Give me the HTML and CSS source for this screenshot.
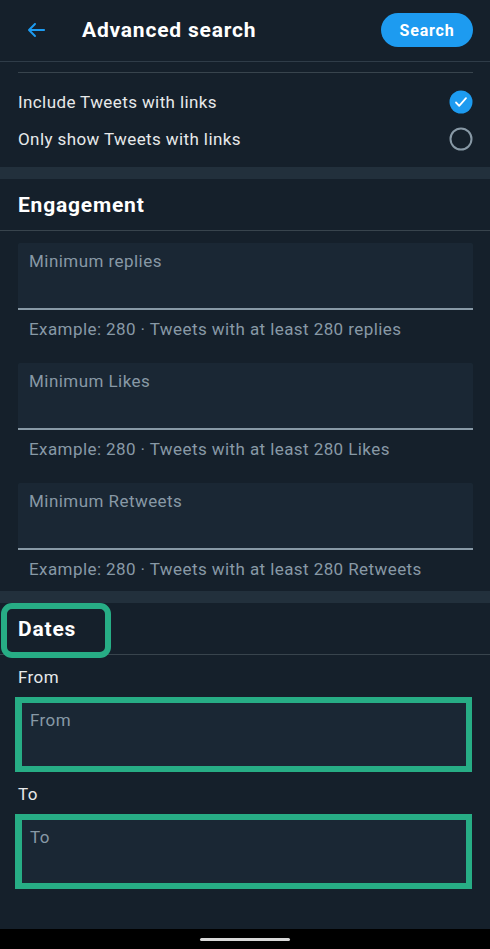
FILE: index.html
```html
<!DOCTYPE html>
<html lang="en">
<head>
<meta charset="utf-8">
<title>Advanced search</title>
<link rel="stylesheet" href="styles.css">
</head>
<body>
<div class="screen">
  <main class="main">
    <header class="topbar">
      <svg class="back" viewBox="0 0 24 24" width="24" height="24"><path d="M20 11H7.414l4.293-4.293c.39-.39.39-1.023 0-1.414s-1.023-.39-1.414 0l-6 6c-.39.39-.39 1.023 0 1.414l6 6c.195.195.45.293.707.293s.512-.098.707-.293c.39-.39.39-1.023 0-1.414L7.414 13H20c.553 0 1-.447 1-1s-.447-1-1-1z"/></svg>
      <h1 class="title">Advanced search</h1>
      <button class="search-btn">Search</button>
    </header>

    <section class="links">
      <div class="links-inner">
        <div class="opt-row">
          <span>Include Tweets with links</span>
          <span class="check on"><svg viewBox="0 0 24 24" width="24" height="24"><circle cx="12" cy="12" r="11.5" fill="#1d9bf0"/><path d="M7 12.5l3.2 3.3L17 8.2" fill="none" stroke="#fff" stroke-width="1.8" stroke-linecap="round" stroke-linejoin="round"/></svg></span>
        </div>
        <div class="opt-row">
          <span>Only show Tweets with links</span>
          <span class="check"><svg viewBox="0 0 24 24" width="24" height="24"><circle cx="12" cy="12" r="10.5" fill="none" stroke="#8899a6" stroke-width="2"/></svg></span>
        </div>
      </div>
    </section>

    <div class="band"></div>

    <section>
      <h2 class="sec-head">Engagement</h2>
      <div class="fields">
        <div class="field">
          <div class="input">Minimum replies</div>
          <div class="helper">Example: 280 · Tweets with at least 280 replies</div>
        </div>
        <div class="field">
          <div class="input">Minimum Likes</div>
          <div class="helper">Example: 280 · Tweets with at least 280 Likes</div>
        </div>
        <div class="field">
          <div class="input">Minimum Retweets</div>
          <div class="helper">Example: 280 · Tweets with at least 280 Retweets</div>
        </div>
      </div>
    </section>

    <div class="band"></div>

    <section>
      <h2 class="sec-head dates-head"><span class="hl">Dates</span></h2>
      <div class="dates">
        <div class="date-label">From</div>
        <div class="date-input">From</div>
        <div class="date-label">To</div>
        <div class="date-input">To</div>
      </div>
    </section>
  </main>
  <footer class="navbar"><span class="home"></span></footer>
</div>
</body>
</html>
```

FILE: styles.css
```css
* { box-sizing: border-box; margin: 0; padding: 0; }
html, body { width: 490px; height: 949px; }
body {
  background: #15202b;
  font-family: Roboto, "Noto Sans", Arial, sans-serif;
  color: #e7e9ea;
  overflow: hidden;
}
.screen { display: flex; flex-direction: column; height: 949px; }
.main { flex: 1; }

.topbar {
  height: 62px;
  display: flex;
  align-items: center;
  padding: 0 17px 1px 24px;
  border-bottom: 1px solid #2f3c48;
}
.back { fill: #1d9bf0; flex: none; }
.title {
  margin-left: 34px;
  font-size: 21px;
  font-weight: 700;
  color: #fff;
  letter-spacing: 0.8px;
}
.search-btn {
  margin-left: auto;
  width: 92px;
  height: 34px;
  border: 0;
  border-radius: 17px;
  background: #1d9bf0;
  color: #fff;
  font-family: inherit;
  font-size: 16px;
  font-weight: 700;
  letter-spacing: 0.8px;
}

.links { padding: 10px 17px 10px 18px; }
.links-inner { border-top: 1px solid #38444d; padding-top: 10px; }
.opt-row {
  height: 37px;
  display: flex;
  align-items: center;
  justify-content: space-between;
  font-size: 17px;
  letter-spacing: 0.4px;
  color: #e7e9ea;
}
.check { display: flex; }

.band { height: 12px; background: #22303c; }

.sec-head {
  height: 52px;
  display: flex;
  align-items: center;
  padding-left: 18px;
  font-size: 21px;
  font-weight: 700;
  letter-spacing: 0.8px;
  color: #fff;
  border-bottom: 1px solid #38444d;
}

.fields { padding: 12px 17px 0 18px; display: flex; flex-direction: column; gap: 12px; }
.input {
  height: 67px;
  background: #1a2734;
  border-bottom: 2px solid #8899a6;
  border-radius: 2px 2px 0 0;
  padding: 8px 11px 0;
  font-size: 17px;
  line-height: 20px;
  letter-spacing: 0.45px;
  color: #8899a6;
}
.helper {
  height: 41px;
  padding: 9px 11px 0;
  font-size: 17px;
  line-height: 20px;
  letter-spacing: 0.42px;
  color: #8899a6;
}

.dates-head { padding-left: 1px; align-items: flex-start; }
.hl {
  display: inline-block;
  height: 55px;
  padding: 0 29px 0 11px;
  border: 6px solid #27ad85;
  border-radius: 11px;
  line-height: 41px;
}

.dates { padding: 0 18px 0 15px; }
.date-label {
  height: 42px;
  padding: 12px 0 0 3px;
  font-size: 17px;
  line-height: 20px;
  letter-spacing: 0.4px;
  color: #e7e9ea;
}
.date-input {
  height: 75px;
  background: #1a2734;
  border: 6px solid #27ad85;
  border-left-width: 7px;
  padding: 7px 8px 0;
  font-size: 17px;
  line-height: 20px;
  letter-spacing: 0.4px;
  color: #8899a6;
}

.navbar {
  height: 20px;
  background: #000;
  display: flex;
  justify-content: center;
  align-items: center;
}
.home { width: 90px; height: 3px; border-radius: 2px; background: #d8d8d8; }
```
